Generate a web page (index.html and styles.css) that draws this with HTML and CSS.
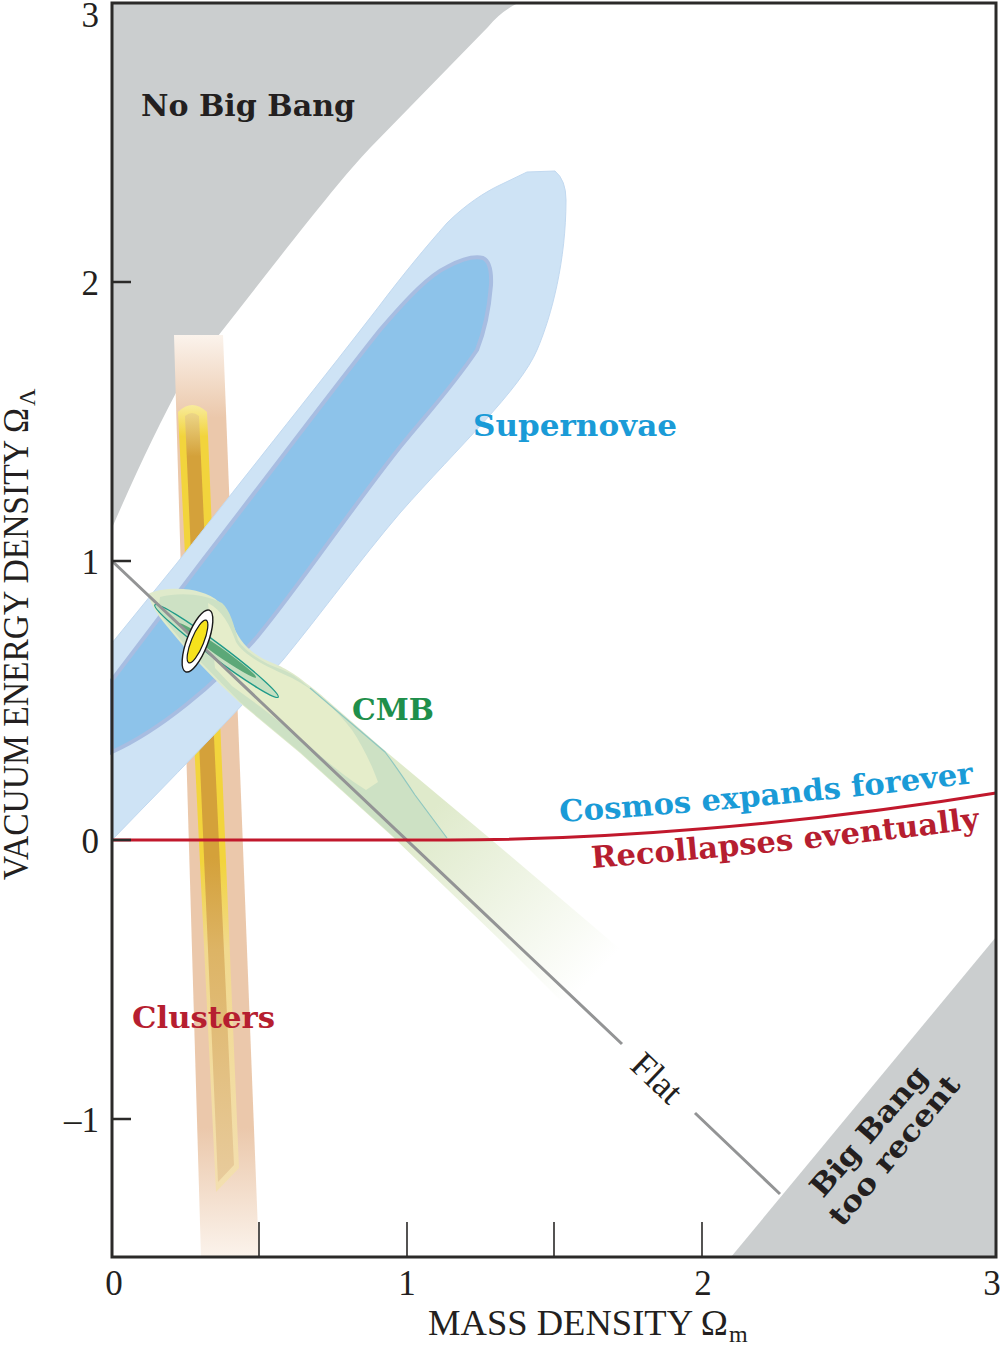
FILE: index.html
```html
<!DOCTYPE html>
<html lang="en">
<head>
<meta charset="utf-8">
<title>Mass density vs vacuum energy density</title>
<link rel="stylesheet" href="styles.css">
</head>
<body>
<main class="figure">
<svg class="chart" viewBox="0 0 1001 1345" width="1001" height="1345" xmlns="http://www.w3.org/2000/svg">
  <defs>
    <linearGradient id="gClOuter" gradientUnits="userSpaceOnUse" x1="0" y1="335" x2="0" y2="1257">
      <stop offset="0" class="st-cl-top"/>
      <stop offset="0.09" class="st-cl-mid"/>
      <stop offset="0.86" class="st-cl-mid"/>
      <stop offset="1" class="st-cl-top"/>
    </linearGradient>
    <linearGradient id="gClYellow" gradientUnits="userSpaceOnUse" x1="0" y1="405" x2="0" y2="1192">
      <stop offset="0" class="st-y-top"/>
      <stop offset="0.04" class="st-y"/>
      <stop offset="0.58" class="st-y"/>
      <stop offset="0.69" class="st-y-pale"/>
      <stop offset="1" class="st-y-end"/>
    </linearGradient>
    <linearGradient id="gClGold" gradientUnits="userSpaceOnUse" x1="0" y1="410" x2="0" y2="1182">
      <stop offset="0" class="st-g-top"/>
      <stop offset="0.06" class="st-g"/>
      <stop offset="0.58" class="st-g"/>
      <stop offset="0.7" class="st-g-pale"/>
      <stop offset="1" class="st-g-end"/>
    </linearGradient>
    <linearGradient id="gCmb" gradientUnits="userSpaceOnUse" x1="440" y1="800" x2="610" y2="960">
      <stop offset="0" class="st-cmb"/>
      <stop offset="1" class="st-cmb-fade"/>
    </linearGradient>
    <path id="pathCosmos" d="M560,822 Q770,808 982,782"/>
    <path id="pathRecol" d="M592,868 Q785,853 984,828"/>
  </defs>

  <!-- excluded regions -->
  <path class="forbid" d="M112,3 L518,3 Q500,12 488,27 L370,148 C330,190 255,290 183,380 Q150,440 112,528 Z"/>
  <path class="forbid" d="M731,1257 L996,937 L996,1257 Z"/>

  <!-- clusters -->
  <path class="cl-outer" d="M174,335 L223,335 L259,1257 L201,1257 Z"/>
  <path class="cl-yellow" d="M178,412 Q192,398 207,412 L239,1168 L216,1192 Z"/>
  <path class="cl-gold" d="M185,416 Q192,410 199,416 L234,1165 L218,1182 Z"/>

  <!-- supernovae -->
  <path class="sn-outer" d="M112,643 L177,563 C250,470 330,370 380,305 C405,272 425,248 447,223 C465,205 485,192 500,185 L527,172 L555,171 Q566,180 566,200 C566,260 552,315 537,350 C520,390 460,445 400,513 C360,560 320,615 283,660 C230,720 170,780 112,840 Z"/>
  <path class="sn-inner" d="M112,680 L203,560 C280,460 340,380 380,330 C410,295 430,275 447,267 C462,259 475,256 483,258 Q492,262 491,285 C489,310 485,330 477,350 C450,390 430,410 400,447 C350,510 300,585 257,637 C215,685 160,730 112,752 Z"/>

  <!-- CMB -->
  <path class="cmb-outer" d="M148,594 C160,588 185,587 200,592 C215,596 226,605 232,622 C238,640 250,655 275,664 C290,670 300,678 320,694 L383,749 L487,836 L600,932 L650,975 L560,1000 L500,940 L393,837 L300,753 L240,703 C215,680 190,655 170,630 C160,618 152,608 148,594 Z"/>
  <path class="cmb-mid" d="M160,597 C180,592 205,594 222,603 C230,610 234,625 238,640 C245,652 265,664 283,670 C295,675 300,680 310,688 L385,752 C395,765 405,780 415,795 L447,838 L395,838 L300,752 L240,702 L190,651 L158,612 Z"/>
  <path class="cmb-light" d="M208,603 C222,610 230,625 236,642 C245,657 270,668 292,678 C315,690 335,708 352,730 C362,745 372,765 378,782 L366,790 C350,780 330,765 305,742 L262,708 L232,686 L215,668 Z"/>
  <path class="cmb-edge" d="M310,688 L385,752 C395,765 405,780 415,795 L447,838"/>
  <ellipse class="cmb-ell" cx="216.5" cy="651" rx="77" ry="7" transform="rotate(36.8 216.5 651)"/>
  <ellipse class="cmb-core" cx="217.5" cy="650.5" rx="47" ry="4.2" transform="rotate(35 217.5 650.5)"/>

  <!-- flat universe line -->
  <path class="flat" d="M112,561 L622,1044 M695,1113 L780,1194"/>
  <text class="flat-label" transform="translate(657,1078) rotate(43.5)" x="0" y="12">Flat</text>

  <!-- expand / recollapse boundary -->
  <path class="boundary" d="M112,840 L450,840 C600,840 800,825 996,793"/>

  <!-- combined constraint -->
  <ellipse class="comb-outer" cx="197.5" cy="641" rx="10.5" ry="33" transform="rotate(21 197.5 641)"/>
  <ellipse class="comb-inner" cx="197.5" cy="641.5" rx="6.2" ry="23" transform="rotate(22 197.5 641.5)"/>

  <!-- region labels -->
  <text class="lbl lbl-dark" x="141" y="116" textLength="214" lengthAdjust="spacingAndGlyphs">No Big Bang</text>
  <text class="lbl lbl-blue" x="473" y="436" textLength="204" lengthAdjust="spacingAndGlyphs">Supernovae</text>
  <text class="lbl lbl-green" x="352" y="720" textLength="82" lengthAdjust="spacingAndGlyphs">CMB</text>
  <text class="lbl lbl-red" x="132" y="1028" textLength="143" lengthAdjust="spacingAndGlyphs">Clusters</text>
  <text class="lbl lbl-blue"><textPath href="#pathCosmos" textLength="416" lengthAdjust="spacingAndGlyphs">Cosmos expands forever</textPath></text>
  <text class="lbl lbl-red"><textPath href="#pathRecol" textLength="390" lengthAdjust="spacingAndGlyphs">Recollapses eventually</textPath></text>
  <text class="lbl lbl-dark lbl-small" transform="translate(823,1199) rotate(-49)" textLength="162" lengthAdjust="spacingAndGlyphs">Big Bang</text>
  <text class="lbl lbl-dark lbl-small" transform="translate(842,1228) rotate(-50)" textLength="186" lengthAdjust="spacingAndGlyphs">too recent</text>

  <!-- frame and ticks -->
  <path class="tick" d="M112,282 H131 M112,561 H131 M112,840 H131 M112,1119 H131"/>
  <path class="tick-x" d="M259,1222 V1257 M407,1222 V1257 M554,1222 V1257 M702,1222 V1257"/>
  <rect class="frame" x="112" y="3" width="884" height="1254"/>

  <!-- tick labels -->
  <text class="tick-label end" x="99" y="27">3</text>
  <text class="tick-label end" x="99" y="295">2</text>
  <text class="tick-label end" x="99" y="574">1</text>
  <text class="tick-label end" x="99" y="853">0</text>
  <text class="tick-label end" x="99" y="1132">–1</text>
  <text class="tick-label mid" x="114" y="1295">0</text>
  <text class="tick-label mid" x="407" y="1295">1</text>
  <text class="tick-label mid" x="703" y="1295">2</text>
  <text class="tick-label mid" x="992" y="1295">3</text>

  <!-- axis titles -->
  <text class="axis-title" x="428" y="1335" textLength="300" lengthAdjust="spacingAndGlyphs">MASS DENSITY Ω</text>
  <text class="axis-sub" x="729" y="1342">m</text>
  <text class="axis-title" transform="translate(28,880) rotate(-90)" textLength="472" lengthAdjust="spacingAndGlyphs">VACUUM ENERGY DENSITY Ω</text>
  <text class="axis-sub" transform="translate(35,406) rotate(-90)">Λ</text>
</svg>
</main>
</body>
</html>
```

FILE: styles.css
```css
html, body {
  margin: 0;
  padding: 0;
  background: #ffffff;
}

.figure {
  display: block;
  width: 1001px;
  height: 1345px;
  overflow: hidden;
}

.chart {
  display: block;
}

/* gradient stops */
.st-cl-top { stop-color: #fbf3ec; }
.st-cl-mid { stop-color: #ebc8ab; }
.st-y-top { stop-color: #f8eb9c; }
.st-y { stop-color: #f2d43c; }
.st-y-pale { stop-color: #f1d98e; }
.st-y-end { stop-color: #f3dfb0; }
.st-g-top { stop-color: #eed98c; }
.st-g { stop-color: #d4a13a; }
.st-g-pale { stop-color: #ddb465; }
.st-g-end { stop-color: #e8cb9c; }
.st-cmb { stop-color: #dfeacb; stop-opacity: 1; }
.st-cmb-fade { stop-color: #dfeacb; stop-opacity: 0; }

/* regions */
.forbid { fill: #cbcecf; }

.cl-outer { fill: url(#gClOuter); }
.cl-yellow { fill: url(#gClYellow); }
.cl-gold { fill: url(#gClGold); }

.sn-outer { fill: #cee3f5; stroke: #c2d9f0; stroke-width: 1; }
.sn-inner { fill: #8dc3ea; stroke: #a8bde1; stroke-width: 4; }

.cmb-outer { fill: url(#gCmb); }
.cmb-mid { fill: #cde1c4; }
.cmb-light { fill: #e5edca; }
.cmb-edge { fill: none; stroke: #8fc7c0; stroke-width: 1.2; }
.cmb-ell { fill: #c6e0c1; stroke: #1f9a88; stroke-width: 1.3; }
.cmb-core { fill: #5ca878; }

.flat { fill: none; stroke: #939495; stroke-width: 3; }
.boundary { fill: none; stroke: #c1182c; stroke-width: 3; }

.comb-outer { fill: #ffffff; stroke: #1a1a1a; stroke-width: 1.4; }
.comb-inner { fill: #f6e21c; stroke: #1a1a1a; stroke-width: 1.2; }

/* frame */
.frame { fill: none; stroke: #2b2a29; stroke-width: 3; }
.tick { fill: none; stroke: #2b2a29; stroke-width: 2.5; }
.tick-x { fill: none; stroke: #2b2a29; stroke-width: 1.6; }

/* text */
.lbl {
  font-family: "DejaVu Serif", "Liberation Serif", serif;
  font-weight: bold;
  font-size: 30px;
}
.lbl-small { font-size: 29px; }
.lbl-dark { fill: #231f20; }
.lbl-blue { fill: #1a9bd7; }
.lbl-green { fill: #1f8f4b; }
.lbl-red { fill: #b61e30; }

.flat-label {
  font-family: "Liberation Serif", "DejaVu Serif", serif;
  font-size: 36px;
  fill: #231f20;
  text-anchor: middle;
}

.tick-label {
  font-family: "Liberation Serif", "DejaVu Serif", serif;
  font-size: 35px;
  fill: #231f20;
}
.tick-label.end { text-anchor: end; }
.tick-label.mid { text-anchor: middle; }

.axis-title {
  font-family: "Liberation Serif", "DejaVu Serif", serif;
  font-size: 35px;
  fill: #231f20;
}
.axis-sub {
  font-family: "Liberation Serif", "DejaVu Serif", serif;
  font-size: 24px;
  fill: #231f20;
}
```
